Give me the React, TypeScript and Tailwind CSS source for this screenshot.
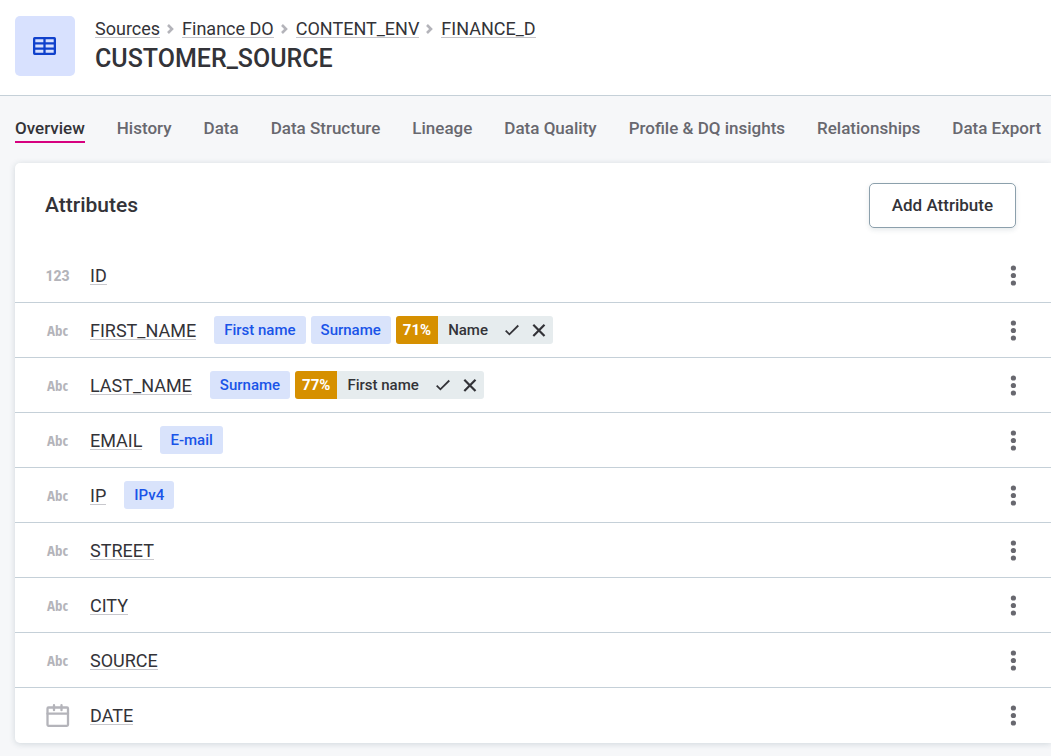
type AttributeType = "number" | "text" | "date";

type Suggestion = {
  score: number;
  term: string;
};

type Attribute = {
  name: string;
  type: AttributeType;
  terms?: string[];
  suggestion?: Suggestion;
};

const BREADCRUMBS = ["Sources", "Finance DO", "CONTENT_ENV", "FINANCE_D"];

const TABS = [
  "Overview",
  "History",
  "Data",
  "Data Structure",
  "Lineage",
  "Data Quality",
  "Profile & DQ insights",
  "Relationships",
  "Data Export"
];

const ATTRIBUTES: Attribute[] = [
  { name: "ID", type: "number" },
  {
    name: "FIRST_NAME",
    type: "text",
    terms: ["First name", "Surname"],
    suggestion: { score: 71, term: "Name" }
  },
  {
    name: "LAST_NAME",
    type: "text",
    terms: ["Surname"],
    suggestion: { score: 77, term: "First name" }
  },
  { name: "EMAIL", type: "text", terms: ["E-mail"] },
  { name: "IP", type: "text", terms: ["IPv4"] },
  { name: "STREET", type: "text" },
  { name: "CITY", type: "text" },
  { name: "SOURCE", type: "text" },
  { name: "DATE", type: "date" }
];

function TableIcon() {
  return (
    <svg className="h-[18px] w-6" viewBox="0 0 24 18" fill="none" stroke="#1041cc" strokeWidth="2.3">
      <rect x="1.15" y="1.15" width="20.7" height="15.7" rx="0.5" />
      <path d="M11.5 1v16M1 6.3h21M1 11.7h21" />
    </svg>
  );
}

function ChevronIcon() {
  return (
    <svg className="h-[10px] w-[7px]" viewBox="0 0 7 10" fill="none" stroke="#b4b4ba" strokeWidth="2.6">
      <path d="M1 1l4 4-4 4" />
    </svg>
  );
}

function CalendarIcon() {
  return (
    <svg className="h-6 w-6" viewBox="0 0 24 24" fill="none" stroke="#b4b4ba" strokeWidth="2.3" strokeLinecap="round" strokeLinejoin="round">
      <rect x="1.5" y="3.5" width="20.5" height="18.3" rx="1" />
      <path d="M1.5 9.7h20.5M8 1.2v5M15.5 1.2v5" />
    </svg>
  );
}

function KebabIcon() {
  return (
    <svg className="h-[21px] w-[6px]" viewBox="0 0 6 21" fill="#68686f">
      <circle cx="3.4" cy="3" r="2.6" />
      <circle cx="3.4" cy="10.5" r="2.6" />
      <circle cx="3.4" cy="18" r="2.6" />
    </svg>
  );
}

function CheckIcon() {
  return (
    <svg className="h-[14px] w-[14px]" viewBox="0 0 14 14" fill="none" stroke="#333338" strokeWidth="1.8">
      <path d="M0.7 7.6l3.7 3.7L13.3 2.5" />
    </svg>
  );
}

function CrossIcon() {
  return (
    <svg className="h-[14px] w-[14px]" viewBox="0 0 14 14" fill="none" stroke="#333338" strokeWidth="2.2">
      <path d="M1.3 1.8l11.2 11.2M12.5 1.8L1.3 13" />
    </svg>
  );
}

function TypeIcon({ type }: { type: AttributeType }) {
  if (type === "date") return <CalendarIcon />;
  if (type === "number") {
    return <span className="pt-px text-sm font-extrabold text-[#b4b4ba]">123</span>;
  }
  return (
    <span className="pt-px font-['Open_Sans_Condensed','Noto_Sans_Condensed','Liberation_Sans_Narrow','Roboto_Condensed',Roboto,sans-serif] text-[15px] font-bold text-[#b4b4ba]">
      Abc
    </span>
  );
}

function SuggestionChip({ score, term }: Suggestion) {
  return (
    <div className="flex h-7 overflow-hidden rounded-[3px] bg-[#e6ecee] text-[15px] leading-7">
      <span className="bg-[#d69000] px-[7px] font-bold text-white">{score}%</span>
      <span className="pr-[17px] pl-2.5 font-medium">{term}</span>
      <button type="button" aria-label={`Accept ${term}`} className="grid w-[14px] place-items-center">
        <CheckIcon />
      </button>
      <button type="button" aria-label={`Reject ${term}`} className="mr-[7px] ml-[13px] grid w-[14px] place-items-center">
        <CrossIcon />
      </button>
    </div>
  );
}

function AttributeRow({ attribute }: { attribute: Attribute }) {
  return (
    <li className="flex h-[55px] items-center border-b border-[#c5d0d8] pr-[35px] pl-[30px] last:border-b-0">
      <div className="mr-5 grid w-[25px] shrink-0 place-items-center">
        <TypeIcon type={attribute.type} />
      </div>
      <a href="#" className="mr-[18px] border-b border-[#c8c8cd] pt-px text-lg leading-[17px]">
        {attribute.name}
      </a>
      <div className="flex gap-[5px]">
        {attribute.terms?.map((term) => (
          <a
            key={term}
            href="#"
            className="h-7 rounded-[3px] bg-[#d9e3fb] px-2.5 text-[15px] leading-7 font-medium text-[#1a54e8]"
          >
            {term}
          </a>
        ))}
        {attribute.suggestion ? <SuggestionChip {...attribute.suggestion} /> : null}
      </div>
      <button type="button" aria-label={`Actions for ${attribute.name}`} className="ml-auto">
        <KebabIcon />
      </button>
    </li>
  );
}

export default function App() {
  return (
    <div className="min-h-screen overflow-hidden bg-[#f6f7f9] font-[Roboto,sans-serif] text-[#333338]">
      <header className="flex gap-5 border-b border-[#c5d0d8] bg-white px-[15px] pt-4 pb-[19px]">
        <div className="grid h-[60px] w-[60px] shrink-0 place-items-center rounded-[5px] bg-[#d8e1fe]">
          <TableIcon />
        </div>
        <div>
          <nav aria-label="Breadcrumb" className="flex h-[26px] items-center">
            {BREADCRUMBS.map((item, i) => (
              <span key={item} className="flex items-center">
                {i > 0 ? (
                  <span className="mr-2 ml-[7px]">
                    <ChevronIcon />
                  </span>
                ) : null}
                <a href="#" className="border-b border-[#c5c5ca] text-lg leading-[17px]">
                  {item}
                </a>
              </span>
            ))}
          </nav>
          <h1 className="text-[25px] leading-[34px] font-medium">CUSTOMER_SOURCE</h1>
        </div>
      </header>

      <nav aria-label="Sections" className="flex gap-8 px-[15px] pt-[21px] pb-5 whitespace-nowrap">
        {TABS.map((tab, i) => (
          <a
            key={tab}
            href="#"
            aria-current={i === 0 ? "page" : undefined}
            className={
              i === 0
                ? "border-b-2 border-[#d6007f] pb-0.5 text-[17px] leading-[22px] font-medium"
                : "border-b-2 border-transparent pb-0.5 text-[17px] leading-[22px] font-medium text-[#68686f]"
            }
          >
            {tab}
          </a>
        ))}
      </nav>

      <main className="mb-3 ml-[15px] rounded-l-[5px] bg-white shadow-[0_1px_6px_rgba(40,70,90,0.18)]">
        <div className="flex items-center justify-between pt-5 pr-[35px] pb-5 pl-[30px]">
          <h2 className="text-[21px] leading-[29px] font-medium">Attributes</h2>
          <button
            type="button"
            className="h-[45px] rounded-[5px] border border-[#8ca0ac] bg-white px-[22px] text-[17px] font-medium shadow-[0_2px_5px_rgba(40,70,90,0.12)]"
          >
            Add Attribute
          </button>
        </div>
        <ul>
          {ATTRIBUTES.map((attribute) => (
            <AttributeRow key={attribute.name} attribute={attribute} />
          ))}
        </ul>
      </main>
    </div>
  );
}
